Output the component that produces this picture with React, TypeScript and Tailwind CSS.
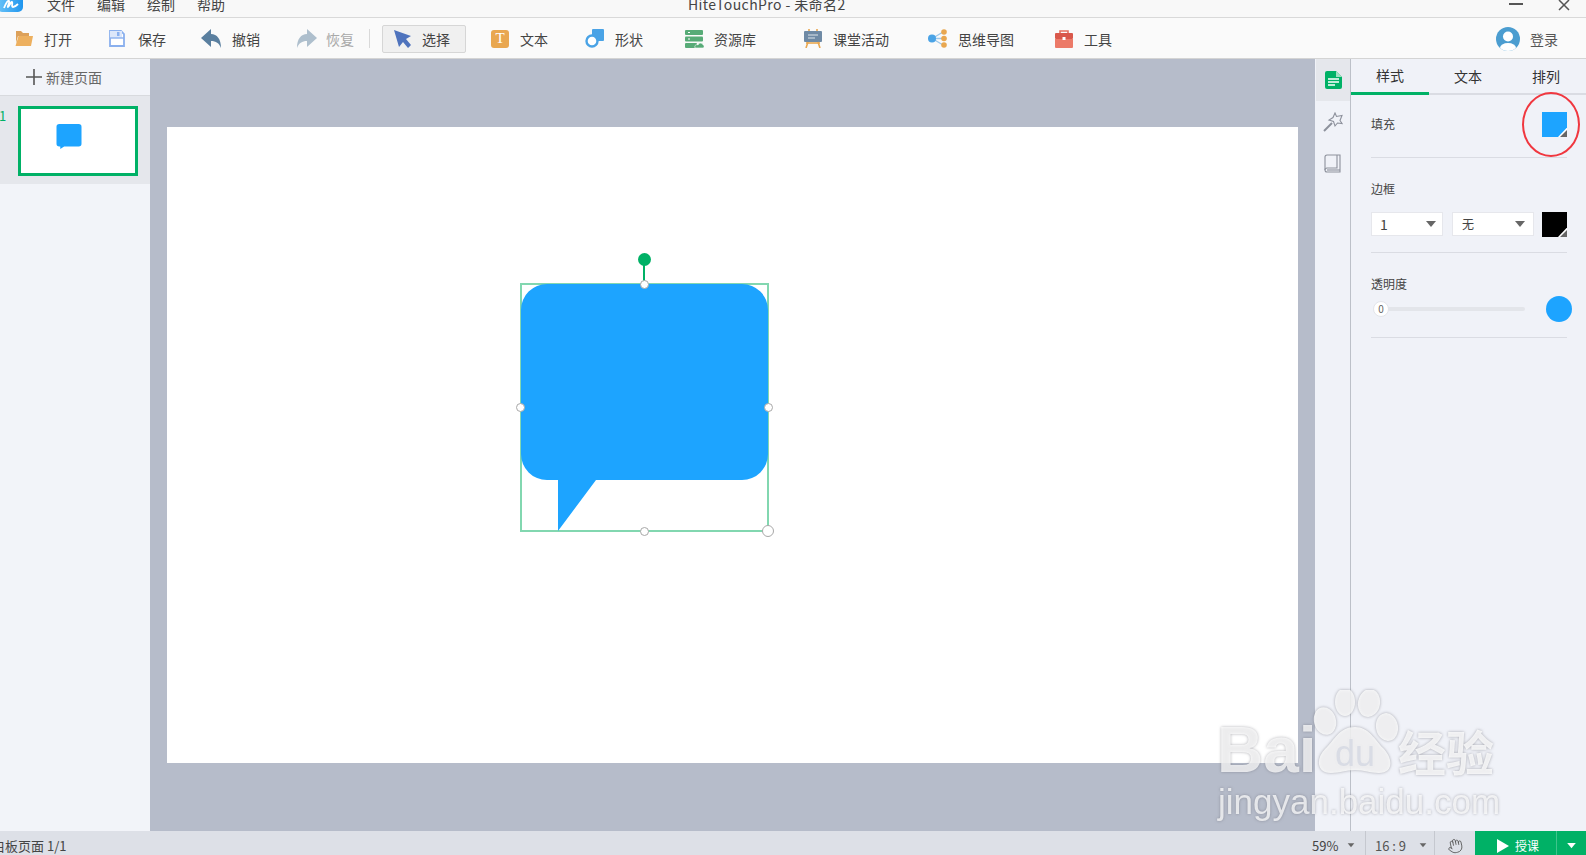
import type { ReactNode } from 'react'
import { Hand } from 'lucide-react'

const font = { fontFamily: '"Noto Sans CJK SC", "Noto Sans", sans-serif' }

function Tool({ icon, label, className, iconBox = 'w-[29px]', muted }: { icon: ReactNode; label: string; className: string; iconBox?: string; muted?: boolean }) {
  return (
    <div className={`flex items-center shrink-0 ${className}`}>
      <span className={`${iconBox} flex items-center`}>{icon}</span>
      <span className={`text-[14px] leading-none ${muted ? 'text-[#a9a9a9]' : 'text-[#444]'}`}>{label}</span>
    </div>
  )
}

function Arrow({ className }: { className: string }) {
  return (
    <svg width="12" height="7" viewBox="0 0 12 7" className={className}>
      <path d="M1 0h10L6 6z" fill="currentColor" />
    </svg>
  )
}

function Swatch({ color }: { color: string }) {
  return (
    <div className="relative w-[25px] h-[25px] shrink-0" style={{ background: color }}>
      <svg width="9" height="9" viewBox="0 0 9 9" className="absolute right-0 bottom-0">
        <path d="M8.5 0 0 9h9V0z" fill="#fff" />
        <path d="M9 2 2 9h7z" fill="#666" />
      </svg>
    </div>
  )
}

function Handle({ className }: { className: string }) {
  return <div className={`absolute w-[9px] h-[9px] rounded-full bg-white border border-[#a8a8a8] ${className}`} />
}

export default function App() {
  return (
    <div className="relative w-[1586px] h-[855px] overflow-hidden flex flex-col bg-[#f0f2f8]" style={font}>
      {/* title bar, cut off at the top */}
      <div className="relative h-[18px] shrink-0 bg-[#f8f8f8] border-b border-[#d9d9d9] overflow-hidden flex items-start text-[14px] text-[#444] leading-[8px]">
        <svg width="24" height="16" viewBox="0 0 24 16" className="absolute left-0 -top-[2px]">
          <defs>
            <linearGradient id="logo" x1="0" x2="1" y1="0" y2="0">
              <stop offset="0" stopColor="#6cc4f8" />
              <stop offset="1" stopColor="#1f95ee" />
            </linearGradient>
          </defs>
          <rect x="-3" y="-6" width="26" height="20" rx="5" fill="url(#logo)" />
          <path d="M4 10c2-5 4-8 5-7s-2 6-1 6 3-6 4-5-1 5 1 5 3-1 5-3" stroke="#fff" strokeWidth="1.8" fill="none" />
        </svg>
        <div className="flex ml-[47px] gap-[22px]">
          <span>文件</span>
          <span>编辑</span>
          <span>绘制</span>
          <span>帮助</span>
        </div>
        <span className="ml-[463px] w-[170px] tracking-[0.4px]">HiteTouchPro - 未命名2</span>
        <div className="ml-auto flex items-start mr-[16px]">
          <div className="w-[14px] h-[2px] bg-[#555] mt-[3px] mr-[35px]" />
          <svg width="12" height="11" viewBox="0 0 12 11">
            <path d="M1 0l10 10M11 0 1 10" stroke="#555" strokeWidth="1.5" />
          </svg>
        </div>
      </div>

      {/* toolbar */}
      <div className="h-[41px] shrink-0 bg-[#fafafa] border-b border-[#d4d4d4] flex items-center pl-[15px] pt-[1px]">
        <Tool
          className="w-[94px]"
          label="打开"
          icon={
            <svg width="18" height="15" viewBox="0 0 18 15">
              <path d="M1 0h5l2 2h6v3H3L1 12z" fill="#dda15a" />
              <path d="M3.500 5H18l-2 10H0.500z" fill="#edb05f" />
            </svg>
          }
        />
        <Tool
          className="w-[92px]"
          label="保存"
          icon={
            <svg width="16" height="17" viewBox="0 0 16 17">
              <path d="M1 1h11l3 3v12H1z" fill="#fff" stroke="#8ab0ee" strokeWidth="1.8" />
              <rect x="1" y="1" width="12" height="7" fill="#dce7fa" />
              <path d="M1 8h14" stroke="#8ab0ee" strokeWidth="1.4" />
              <rect x="8" y="2" width="2.500" height="4" fill="#8ab0ee" />
            </svg>
          }
        />
        <Tool
          className="w-[95px]"
          iconBox="w-[31px]"
          label="撤销"
          icon={
            <svg width="21" height="19" viewBox="0 0 21 19">
              <path d="M0 9 10 0v5c6 0 10 5 10 14-2-5-5-7-10-7v6z" fill="#5a7f9f" />
            </svg>
          }
        />
        <Tool
          className="w-[73px]"
          iconBox="w-[30px]"
          label="恢复"
          muted
          icon={
            <svg width="21" height="19" viewBox="0 0 21 19">
              <path d="M21 9 11 0v5C5 5 1 10 1 19c2-5 5-7 10-7v6z" fill="#aebfcd" />
            </svg>
          }
        />
        <div className="w-px h-[19px] bg-[#d9d9d9] mr-[12px]" />
        <div className="w-[84px] h-[28px] shrink-0 mr-[25px] flex items-center pl-[11px] bg-[#f0f0f0] border border-[#d6d6d6] rounded-[2px]">
          <Tool
            className=""
            iconBox="w-[28px]"
            label="选择"
            icon={
              <svg width="18" height="18" viewBox="0 0 18 18">
                <path d="M0 0l17 6-5 3 5 6-3 3-5-6-4 5z" fill="#4f73bd" />
              </svg>
            }
          />
        </div>
        <Tool
          className="w-[94px]"
          label="文本"
          icon={
            <div className="w-[18px] h-[18px] rounded-[3px] bg-[#e9a750] flex items-center justify-center text-white text-[15px] leading-none" style={{ fontFamily: '"Liberation Serif", serif' }}>
              T
            </div>
          }
        />
        <Tool
          className="w-[100px]"
          iconBox="w-[30px]"
          label="形状"
          icon={
            <svg width="19" height="19" viewBox="0 0 19 19">
              <rect x="7" y="0" width="12" height="12" rx="1" fill="#4aa3e6" />
              <circle cx="7" cy="12" r="5.500" fill="#fff" stroke="#4aa3e6" strokeWidth="2.400" />
            </svg>
          }
        />
        <Tool
          className="w-[119px]"
          label="资源库"
          icon={
            <svg width="19" height="18" viewBox="0 0 19 18">
              <rect x="0" y="0" width="18" height="5" rx="1" fill="#57ab77" />
              <rect x="0" y="6.500" width="18" height="5" rx="1" fill="#57ab77" />
              <rect x="0" y="13" width="12" height="5" rx="1" fill="#57ab77" />
              <path d="M3 2.500h2M3 9h2" stroke="#fff" />
              <path d="M10 18c-1-3 2-4 3-3 1-3 5-2 5 0 2 0 1 3 0 3z" fill="#57ab77" stroke="#fff" strokeWidth=".6" />
            </svg>
          }
        />
        <Tool
          className="w-[124px]"
          label="课堂活动"
          icon={
            <svg width="18" height="19" viewBox="0 0 18 19">
              <path d="M5 0v3M13 0v3" stroke="#e9a750" strokeWidth="1.600" />
              <rect x="0" y="2" width="18" height="11" rx="1" fill="#6f8aa5" />
              <path d="M4 6h10M4 9h7" stroke="#dfe5ea" />
              <path d="M2 14h14" stroke="#e9a750" strokeWidth="1.600" />
              <path d="M4 13 2 19M14 13l2 6" stroke="#e9a750" strokeWidth="1.600" />
            </svg>
          }
        />
        <Tool
          className="w-[127px]"
          iconBox="w-[30px]"
          label="思维导图"
          icon={
            <svg width="20" height="19" viewBox="0 0 20 19">
              <path d="M5 9 15 3M5 9.500h10M5 10l10 6" stroke="#9cc7ea" strokeWidth="1.300" />
              <circle cx="4" cy="9.500" r="4" fill="#4aa3e6" />
              <circle cx="16" cy="3" r="2.800" fill="#e9a750" />
              <circle cx="16" cy="9.500" r="2.800" fill="#e9a750" />
              <circle cx="16" cy="16" r="2.800" fill="#e9a750" />
            </svg>
          }
        />
        <Tool
          className=""
          label="工具"
          icon={
            <svg width="18" height="19" viewBox="0 0 18 19">
              <path d="M5 5V2h8v3" stroke="#e5705f" strokeWidth="1.600" fill="none" />
              <rect x="0" y="4" width="18" height="6" rx="1" fill="#d9584b" />
              <path d="M0 10h18v8a1 1 0 0 1-1 1H1a1 1 0 0 1-1-1z" fill="#ec7a68" />
              <rect x="7.500" y="8" width="3" height="3" fill="#fff" />
            </svg>
          }
        />
        <div className="ml-auto mr-[28px] flex items-center gap-[10px]">
          <svg width="24" height="24" viewBox="0 0 24 24">
            <defs>
              <clipPath id="avatar">
                <circle cx="12" cy="12" r="12" />
              </clipPath>
            </defs>
            <circle cx="12" cy="12" r="12" fill="#4b9dd0" />
            <g clipPath="url(#avatar)" fill="#fff">
              <circle cx="12" cy="9.500" r="5" />
              <ellipse cx="12" cy="21" rx="8" ry="5" />
            </g>
          </svg>
          <span className="text-[14px] leading-none text-[#555]">登录</span>
        </div>
      </div>

      {/* body */}
      <div className="flex-1 flex min-h-0">
        <div className="w-[150px] shrink-0 bg-[#f2f4f9] flex flex-col">
          <div className="h-[37px] border-b border-[#d8dade] flex items-center pl-[26px] text-[14px] text-[#666]">
            <svg width="16" height="16" viewBox="0 0 16 16" className="mr-[4px]">
              <path d="M8 0v16M0 8h16" stroke="#555" strokeWidth="1.600" />
            </svg>
            新建页面
          </div>
          <div className="relative h-[88px] bg-[#e5e7ec] pl-[18px] pt-[10px]">
            <span className="absolute -left-[1px] top-[12px] text-[13px] leading-[16px] text-[#00b166]">1</span>
            <div className="w-[120px] h-[70px] bg-white border-[3px] border-[#00b166] pt-[15px] pl-[35px]">
              <svg width="26" height="25" viewBox="0 0 245 245">
                <path d="M27 0h191a27 27 0 0 1 27 27v167a27 27 0 0 1-27 27H75l-38 24V221H27a27 27 0 0 1-27-27V27A27 27 0 0 1 27 0z" fill="#1da4ff" />
              </svg>
            </div>
          </div>
        </div>

        <div className="w-[1165px] shrink-0 bg-[#b6bcca] pl-[17px] pt-[68px]">
          <div className="relative w-[1131px] h-[636px] bg-white">
            {/* selected shape on the slide */}
            <div className="absolute left-[353px] top-[156px] w-[249px] h-[249px] border-2 border-[#82d7b0]">
              <svg width="249" height="249" viewBox="0 0 249 249" className="absolute -left-[2px] -top-[2px]">
                <path d="M27 1h195a26 26 0 0 1 26 26v144a26 26 0 0 1-26 26H76l-38 51v-51H27a26 26 0 0 1-26-26V27a26 26 0 0 1 26-26z" fill="#1da4ff" />
              </svg>
              <div className="absolute left-[121px] -top-[24px] w-[2px] h-[24px] bg-[#00b166]" />
              <div className="absolute left-[116px] -top-[32px] w-[13px] h-[13px] rounded-full bg-[#00b166]" />
              <Handle className="left-[118px] -top-[5px]" />
              <Handle className="-left-[6px] top-[118px]" />
              <Handle className="-right-[6px] top-[118px]" />
              <Handle className="left-[118px] -bottom-[6px]" />
              <div className="absolute -right-[7px] -bottom-[7px] w-[12px] h-[12px] rounded-full bg-white border border-[#a8a8a8]" />
            </div>
          </div>
        </div>

        <div className="w-[35px] shrink-0 bg-[#f0f2f8] flex flex-col">
          <div className="h-[42px] ml-px bg-[#e5e7ec] flex items-center justify-center">
            <svg width="17" height="18" viewBox="0 0 17 18">
              <path d="M2 0h9l6 6v10a2 2 0 0 1-2 2H2a2 2 0 0 1-2-2V2a2 2 0 0 1 2-2z" fill="#00b166" />
              <path d="M11 0v6h6z" fill="#9fe0c2" />
              <path d="M3 8h11M3 11h11M3 14h7" stroke="#fff" strokeWidth="1.300" />
            </svg>
          </div>
          <div className="h-[41px] flex items-center justify-center">
            <svg width="20" height="20" viewBox="0 0 20 20" fill="none" stroke="#8d919c" strokeWidth="1.100">
              <path d="M12 1l1.500 3.500L19 3.500l-2 5 2 3-4.500-.5-2.500 3-1.500-4.500L6 8l4-2.500z" />
              <path d="M9 11 1 19" strokeWidth="2" />
            </svg>
          </div>
          <div className="h-[42px] flex items-center justify-center">
            <svg width="17" height="19" viewBox="0 0 17 19" fill="none" stroke="#8d919c" strokeWidth="1.100">
              <path d="M3 1h13v17H3a2 2 0 0 1-2-2V3a2 2 0 0 1 2-2z" />
              <path d="M13 1v13H3a2 2 0 0 0-2 2" />
              <path d="M3 16h13" />
            </svg>
          </div>
        </div>

        <div className="flex-1 border-l border-[#bcc0c8] flex flex-col bg-[#f0f2f8]">
          <div className="h-[36px] shrink-0 flex border-b-2 border-[#dadce3] text-[14px] text-[#333]">
            <div className="w-[78px] h-[36px] border-b-[3px] border-[#00b166] flex items-center justify-center">样式</div>
            <div className="w-[78px] flex items-center justify-center">文本</div>
            <div className="w-[78px] flex items-center justify-center">排列</div>
          </div>
          <div className="pl-[20px] pr-[19px] flex flex-col text-[12px] text-[#444]">
            <div className="relative h-[63px] flex items-center justify-between border-b border-[#dadce3] pb-[3px]">
              <span className="-mt-[2px]">填充</span>
              <Swatch color="#1da4ff" />
              <div className="absolute -right-[13px] -top-[3px] w-[58px] h-[65px] rounded-[50%] border-[2.5px] border-[#f0373f]" />
            </div>
            <div className="h-[95px] border-b border-[#dadce3] pt-[22px]">
              <div className="leading-[18px]">边框</div>
              <div className="flex items-start mt-[14px]">
                <div className="w-[72px] h-[24px] bg-white border border-[#e6e7ec] flex items-center justify-between pl-[8px] pr-[5px] text-[14px]">
                  <span>1</span>
                  <Arrow className="text-[#666]" />
                </div>
                <div className="w-[82px] h-[24px] ml-[9px] mr-[8px] bg-white border border-[#e6e7ec] flex items-center justify-between pl-[9px] pr-[7px]">
                  <span>无</span>
                  <Arrow className="text-[#666]" />
                </div>
                <Swatch color="#000" />
              </div>
            </div>
            <div className="h-[85px] border-b border-[#dadce3] pt-[22px]">
              <div className="leading-[18px]">透明度</div>
              <div className="relative flex items-center justify-between h-[26px] mt-[3px]">
                <div className="relative w-[152px] h-[4px] ml-[2px] rounded-full bg-[#e3e5ea]">
                  <div className="absolute left-0 -top-[6px] w-[16px] h-[16px] rounded-full bg-white border border-[#e3e5ea] flex items-center justify-center text-[10px] leading-none text-[#666]">0</div>
                </div>
                <div className="w-[26px] h-[26px] rounded-full bg-[#1da4ff] -mr-[5px]" />
              </div>
            </div>
          </div>
        </div>
      </div>

      {/* status bar */}
      <div className="h-[24px] shrink-0 bg-[#dde0e7] flex items-center text-[13px] text-[#444]">
        <span className="w-[1312px] -ml-[8px] pt-[5px] whitespace-nowrap">白板页面 1/1</span>
        <div className="flex items-center ml-[8px] w-[53px] pt-[5px]">
          <span className="w-[32px]">59%</span>
          <Arrow className="text-[#666] w-[8px] h-[5px] ml-[3px]" />
        </div>
        <div className="w-px h-full bg-[#c5c8cf]" />
        <div className="flex items-center w-[68px] pl-[9px] text-[#555] pt-[5px]">
          <span className="w-[43px]">16 : 9</span>
          <Arrow className="text-[#666] w-[8px] h-[5px] ml-[1px]" />
        </div>
        <div className="w-px h-full bg-[#c5c8cf]" />
        <div className="w-[40px] flex justify-center pt-[5px]">
          <Hand size={16} strokeWidth={1.2} className="text-[#555] -rotate-12" />
        </div>
        <div className="w-[111px] h-full bg-[#00b166] flex items-center text-white text-[12px]">
          <div className="flex items-center w-[81px] pl-[22px] pt-[5px]">
            <svg width="12" height="14" viewBox="0 0 12 14" className="mr-[6px]">
              <path d="M0 0l12 7-12 7z" fill="#fff" />
            </svg>
            授课
          </div>
          <div className="w-px h-full bg-[#3fc48c]" />
          <div className="pt-[5px] ml-[9px] flex">
            <Arrow className="text-white w-[11px] h-[6px]" />
          </div>
        </div>
      </div>

      {/* baidu watermark over the page */}
      <div className="absolute left-[1210px] top-[690px] w-[300px] h-[135px] pointer-events-none" style={{ filter: 'drop-shadow(0 0 1.5px rgba(90,90,100,.6))' }}>
        <span className="absolute left-[7px] top-[29px] text-[64px] leading-[62px] font-bold text-white/75" style={{ fontFamily: '"Liberation Sans", sans-serif' }}>Bai</span>
        <svg width="110" height="105" viewBox="0 0 110 105" className="absolute left-[98px] top-0">
          <g fill="#fff" fillOpacity=".8">
            <ellipse cx="17" cy="31" rx="11" ry="14" transform="rotate(-15 17 31)" />
            <ellipse cx="37" cy="12" rx="10" ry="14" />
            <ellipse cx="61" cy="13" rx="11" ry="14" transform="rotate(10 61 13)" />
            <ellipse cx="79" cy="37" rx="11" ry="14" transform="rotate(-10 79 37)" />
            <path d="M47 37c14 0 20 13 28 21 10 10 11 25-4 25-10 0-14-3-24-3s-14 3-24 3C8 83 8 68 17 59c9-8 14-22 30-22z" />
          </g>
        </svg>
        <span className="absolute left-[125px] top-[46px] text-[36px] leading-[36px] text-[#d9dce5]" style={{ fontFamily: '"Liberation Sans", sans-serif' }}>du</span>
        <span className="absolute left-[188px] top-[36px] text-[48px] leading-[48px] font-bold text-white/80 whitespace-nowrap" style={font}>经验</span>
        <span className="absolute left-[8px] top-[92px] text-[35px] leading-[40px] text-white/75 whitespace-nowrap" style={{ fontFamily: '"Liberation Sans", sans-serif' }}>jingyan.baidu.com</span>
      </div>
    </div>
  )
}
